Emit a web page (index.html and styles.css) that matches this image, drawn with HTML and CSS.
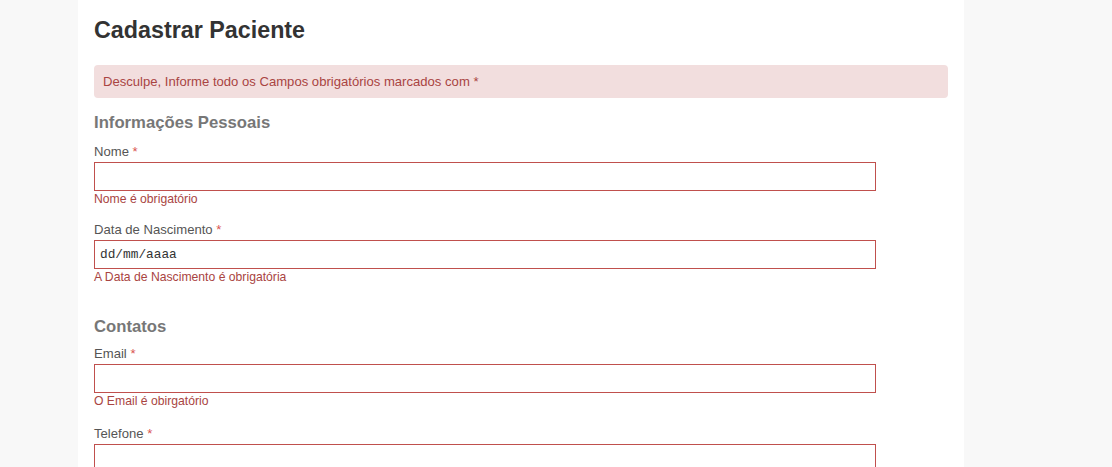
FILE: index.html
```html
<!DOCTYPE html>
<html lang="pt-BR">
<head>
<meta charset="utf-8">
<title>Cadastrar Paciente</title>
<link rel="stylesheet" href="styles.css">
</head>
<body>
<div class="page">
  <main class="card">
    <h1 class="title">Cadastrar Paciente</h1>
    <div class="alert">Desculpe, Informe todo os Campos obrigatórios marcados com *</div>

    <section class="section">
      <h2 class="section-title">Informações Pessoais</h2>
      <div class="field">
        <label class="label">Nome <span class="req">*</span></label>
        <input class="input" type="text">
        <div class="error">Nome é obrigatório</div>
      </div>
      <div class="field">
        <label class="label">Data de Nascimento <span class="req">*</span></label>
        <input class="input input-date" type="text" value="dd/mm/aaaa">
        <div class="error">A Data de Nascimento é obrigatória</div>
      </div>
    </section>

    <section class="section section-contacts">
      <h2 class="section-title">Contatos</h2>
      <div class="field">
        <label class="label">Email <span class="req">*</span></label>
        <input class="input" type="text">
        <div class="error">O Email é obirgatório</div>
      </div>
      <div class="field">
        <label class="label">Telefone <span class="req">*</span></label>
        <input class="input" type="text">
        <div class="error">O Telefone é obrigatório</div>
      </div>
    </section>
  </main>
</div>
</body>
</html>
```

FILE: styles.css
```css
html, body {
  margin: 0;
  padding: 0;
  background: #f8f8f8;
  font-family: "Liberation Sans", Arial, sans-serif;
  color: #555;
}

.page {
  padding-left: 78px;
}

.card {
  width: 886px;
  box-sizing: border-box;
  background: #fff;
  padding: 16px 16px 40px 16px;
  min-height: 600px;
}

.title {
  margin: 0;
  font-size: 23.3px;
  line-height: 28px;
  font-weight: bold;
  color: #333;
}

.alert {
  margin-top: 21px;
  background: #f2dede;
  color: #a94442;
  font-size: 13.1px;
  line-height: 17px;
  padding: 8px 9px;
  border-radius: 4px;
}

.section {
  margin-top: 14px;
}

.section + .section {
  margin-top: 30px;
}

.section-title {
  margin: 0 0 8px 0;
  font-size: 16.7px;
  line-height: 22px;
  font-weight: bold;
  color: #777;
}

.section-contacts .section-title {
  margin-bottom: 6px;
}

.field {
  display: flex;
  flex-direction: column;
  align-items: flex-start;
  margin-bottom: 12px;
}

.section-contacts .field {
  margin-bottom: 14px;
}

.label {
  font-size: 13.1px;
  line-height: 20px;
  color: #555;
  margin-bottom: 0;
}

.req {
  color: #d9534f;
}

.input {
  width: 782px;
  height: 29px;
  box-sizing: border-box;
  border: 1px solid #c0504d;
  border-radius: 0;
  background: #fff;
  margin: 0;
  padding: 0 5px;
  font-family: "Liberation Mono", "DejaVu Sans Mono", monospace;
  font-size: 12.8px;
  color: #333;
  outline: none;
}

.error {
  font-size: 12.2px;
  line-height: 17px;
  color: #a94442;
}
```
